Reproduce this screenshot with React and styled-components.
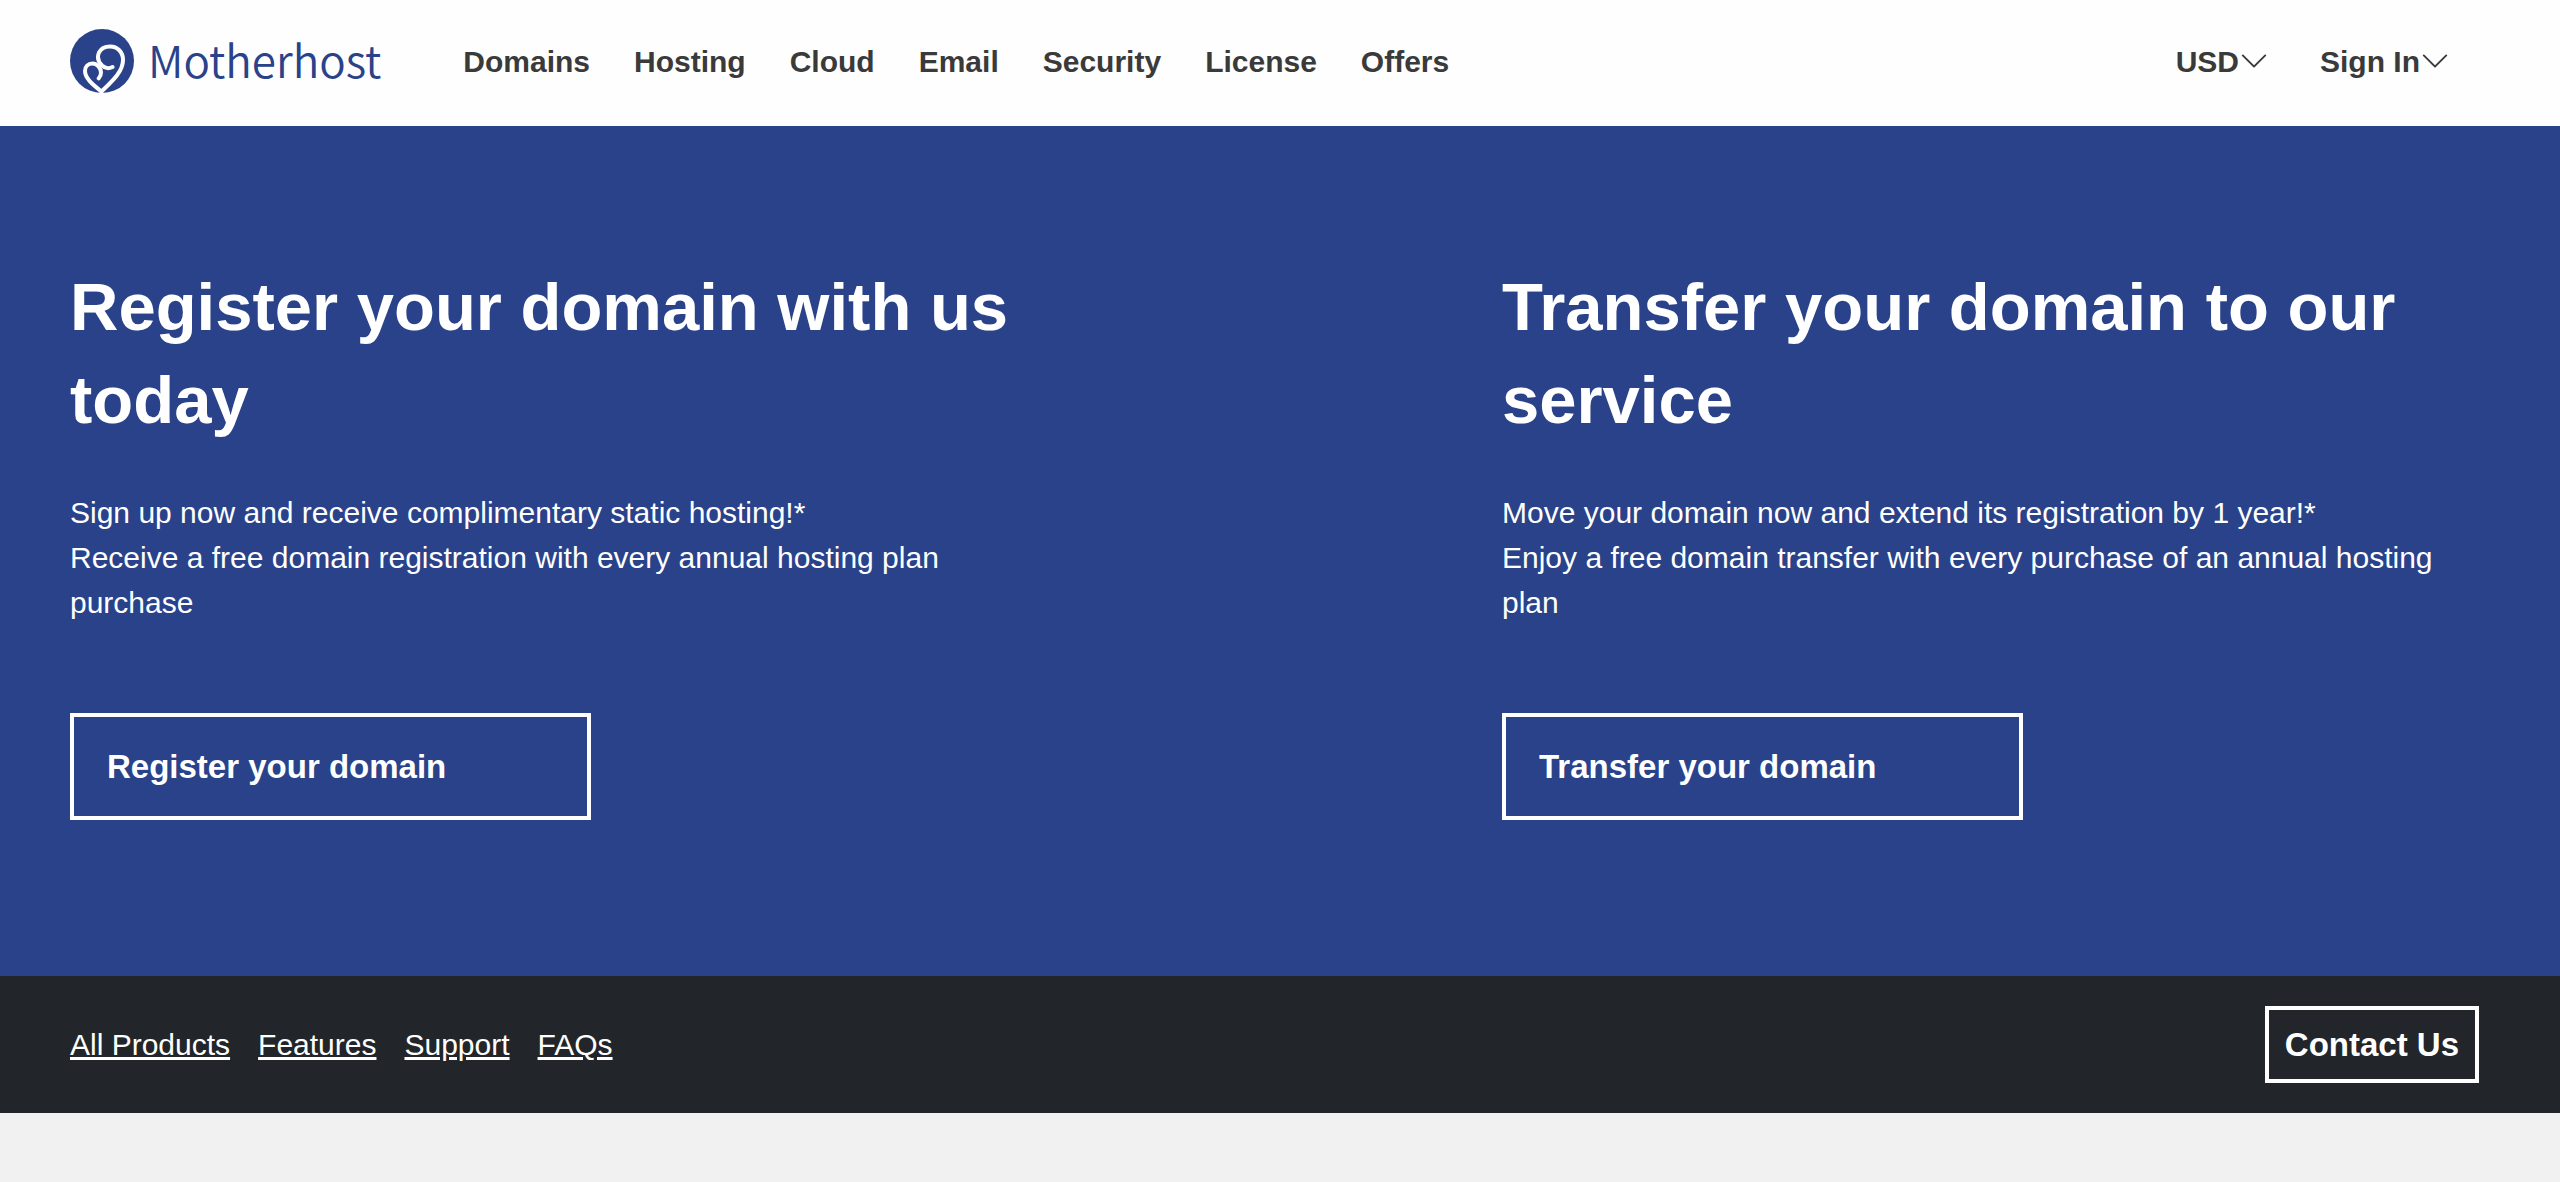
import React from "react"
import styled, { createGlobalStyle } from "styled-components"
import { BsChevronDown } from "react-icons/bs"

const GlobalStyle = createGlobalStyle`
* {
box-sizing: border-box;
}
body {
margin: 0;
background-color: #f1f1f1;
font-family: "Liberation Sans", Arial, sans-serif;
font-size: 30px;
line-height: 45px;
}
`

const Header = styled.header`
display: flex;
align-items: center;
justify-content: space-between;
min-height: 126px;
padding: 0 110px 4px 70px;
background-color: #fefefe;
`

const HeaderGroup = styled.div`
display: flex;
align-items: center;
gap: 82px;
`

const Logo = styled.a`
display: flex;
align-items: center;
gap: 14px;
color: #29428a;
text-decoration: none;
`

const LogoText = styled.span`
padding-bottom: 4px;
font-family: "Noto Sans CJK SC", "Noto Sans", sans-serif;
font-size: 44px;
font-weight: 350;
line-height: 60px;
`

const Nav = styled.nav`
display: flex;
gap: 44px;
`

const NavLink = styled.a`
color: #3a3a3a;
font-weight: bold;
text-decoration: none;
`

const Account = styled.div`
display: flex;
gap: 51px;
`

const DropdownBtn = styled.button`
display: flex;
align-items: center;
padding: 0;
border: none;
background: none;
color: #3a3a3a;
font: inherit;
font-weight: bold;
cursor: pointer;
`

const Hero = styled.main`
display: flex;
justify-content: space-between;
gap: 44px;
padding: 134px 82px 156px 70px;
background-color: #29428a;
color: #fff;
`

const Offer = styled.section`
display: flex;
flex-direction: column;
align-items: flex-start;
flex: 0 1 976px;
`

const OfferTitle = styled.h2`
margin: 0 0 44px;
font-size: 67px;
line-height: 93px;
`

const OfferText = styled.p`
margin: 0;
`

const OutlineBtn = styled.button`
border: 4px solid #fff;
background: none;
color: #fff;
font-family: inherit;
font-size: 33px;
font-weight: bold;
line-height: 51px;
text-align: left;
cursor: pointer;
`

const OfferBtn = styled(OutlineBtn)`
width: 521px;
max-width: 100%;
margin-top: 88px;
padding: 24px 33px;
`

const ContactBtn = styled(OutlineBtn)`
padding: 9px 16px;
`

const Footer = styled.footer`
display: flex;
align-items: center;
justify-content: space-between;
padding: 30px 81px 30px 70px;
background-color: #22262a;
`

const FooterLinks = styled.nav`
display: flex;
gap: 28px;
`

const FooterLink = styled.a`
color: #fff;
text-decoration-thickness: 3px;
`

const navItems = ["Domains", "Hosting", "Cloud", "Email", "Security", "License", "Offers"]
const accountItems = ["USD", "Sign In"]
const footerItems = ["All Products", "Features", "Support", "FAQs"]

const offers = [
    {
        title: "Register your domain with us today",
        lines: [
            "Sign up now and receive complimentary static hosting!*",
            "Receive a free domain registration with every annual hosting plan purchase",
        ],
        action: "Register your domain",
    },
    {
        title: "Transfer your domain to our service",
        lines: [
            "Move your domain now and extend its registration by 1 year!*",
            "Enjoy a free domain transfer with every purchase of an annual hosting plan",
        ],
        action: "Transfer your domain",
    },
]

const LogoMark = () =>
    (
        <svg width="64" height="64" viewBox="0 0 64 64" fill="none" aria-hidden="true">
            <circle cx="32" cy="32" r="32" fill="#29428a" />
            <g stroke="#fefefe" strokeWidth="4" strokeLinecap="round" strokeLinejoin="round">
                <path d="M42.500 38C39 39.800 35.500 39.800 32 36.500C28.500 33 27 28 29 23.500C31 19.500 35 17.500 40 17.500C47.500 17.500 53 23 53 31C53 42 44 50.500 31.500 62.500" />
                <path d="M31.500 62.500C22 55 15 49 15 42C15 37.500 18 34.500 22.500 34.500C27 34.500 31 39 31 43.500C31 46 30 48 28.700 49.300" />
            </g>
        </svg>
    )

export default function App() {
    return (
        <>
            <GlobalStyle />
            <Header>
                <HeaderGroup>
                    <Logo href="#">
                        <LogoMark />
                        <LogoText>Motherhost</LogoText>
                    </Logo>
                    <Nav>
                        {navItems.map((item) => <NavLink key={item} href="#">{item}</NavLink>)}
                    </Nav>
                </HeaderGroup>
                <Account>
                    {accountItems.map((item) =>
                        <DropdownBtn key={item} type="button">
                            {item}
                            <BsChevronDown />
                        </DropdownBtn>)}
                </Account>
            </Header>
            <Hero>
                {offers.map((offer) =>
                    <Offer key={offer.action}>
                        <OfferTitle>{offer.title}</OfferTitle>
                        {offer.lines.map((line) => <OfferText key={line}>{line}</OfferText>)}
                        <OfferBtn type="button">{offer.action}</OfferBtn>
                    </Offer>)}
            </Hero>
            <Footer>
                <FooterLinks>
                    {footerItems.map((item) => <FooterLink key={item} href="#">{item}</FooterLink>)}
                </FooterLinks>
                <ContactBtn type="button">Contact Us</ContactBtn>
            </Footer>
        </>
    )
}
